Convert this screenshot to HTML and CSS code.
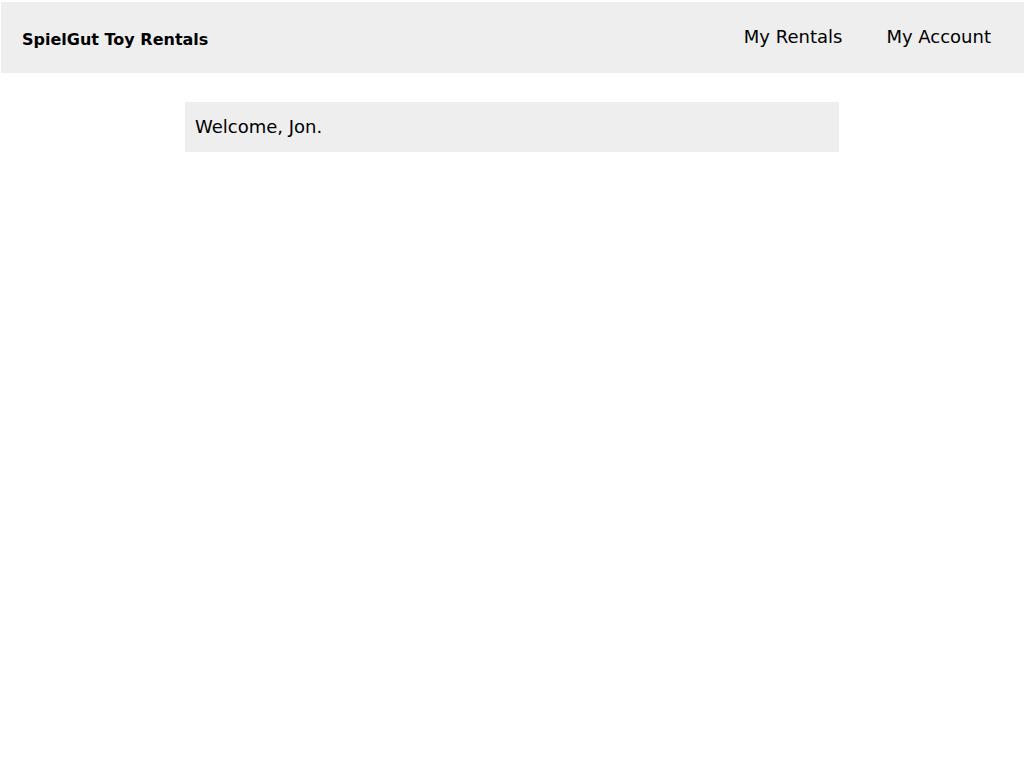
FILE: index.html
```html
<!DOCTYPE html>
<html>
<head>
<meta charset="utf-8">
<link rel="stylesheet" href="styles.css">
<title>SpielGut Toy Rentals</title>
</head>
<body>
<header class="topbar">
  <div class="brand">SpielGut Toy Rentals</div>
  <nav class="nav">
    <a class="nav-link" href="#">My Rentals</a>
    <a class="nav-link" href="#">My Account</a>
  </nav>
</header>
<main class="content">
  <div class="welcome">Welcome, Jon.</div>
</main>
</body>
</html>
```
FILE: styles.css
```css
html, body {
  margin: 0;
  padding: 0;
  background: #fff;
  font-family: "DejaVu Sans", sans-serif;
  color: #000;
}
.topbar {
  margin: 2px 0 0 1px;
  height: 71px;
  background: #eeeeee;
  display: flex;
  align-items: center;
  justify-content: space-between;
  padding: 0 33px 0 21px;
}
.brand {
  font-weight: bold;
  font-size: 16px;
  padding-top: 4px;
}
.nav {
  display: flex;
  gap: 44px;
  padding-bottom: 2px;
}
.nav-link {
  color: #000;
  text-decoration: none;
  font-size: 18px;
}
.content {
  display: flex;
  justify-content: center;
  margin-top: 29px;
}
.welcome {
  box-sizing: border-box;
  width: 654px;
  height: 50px;
  padding: 0 10px 2px;
  background: #eeeeee;
  display: flex;
  align-items: center;
  font-size: 18px;
}
```
